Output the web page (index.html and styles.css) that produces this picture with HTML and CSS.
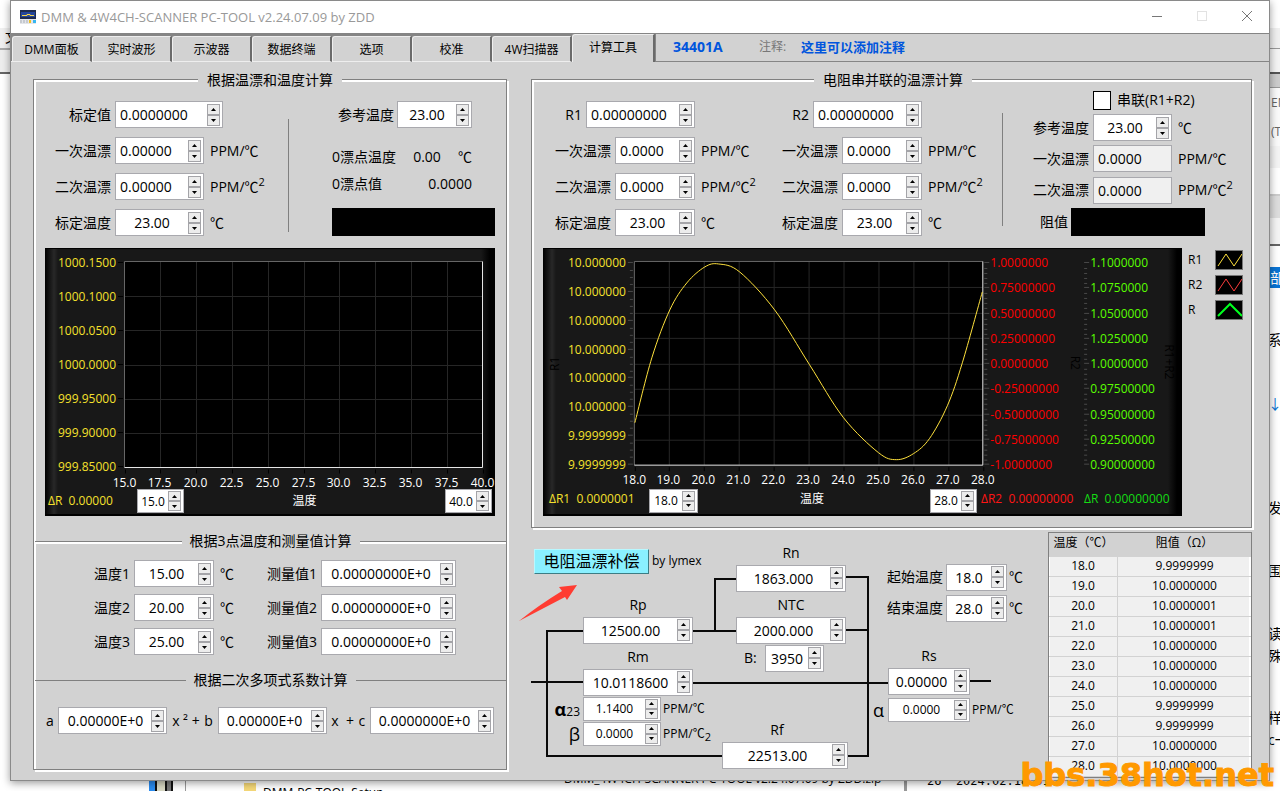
FILE: index.html
```
<!DOCTYPE html>
<html lang="zh-CN">
<head>
  <meta charset="UTF-8">
  <meta name="viewport" content="width=device-width, initial-scale=1.0">
  <title>DMM &amp; 4W4CH-SCANNER PC-TOOL</title>
  <link rel="stylesheet" href="styles.css">
</head>
<body>
  <!-- other windows behind the tool -->
  <div class="desktop">
    <div class="strip-left"><span>文</span></div>
    <div class="strip-right">
      <div class="bar-light"></div>
      <div class="bar-tabs"></div>
      <div class="bar-menu">EN<br>(T)</div>
      <div class="bar-tools"></div>
      <div class="bar-sel">部</div>
      <span class="frag f1">系类</span>
      <span class="frag f2">↓</span>
      <span class="frag f3">发</span>
      <span class="frag f4">围</span>
      <span class="frag f5">读</span>
      <span class="frag f6">殊</span>
      <span class="frag f7">样了</span>
      <span class="frag f8">c一</span>
    </div>
    <div class="strip-bottom">
      <span class="file-mark"></span>
      <span class="file folder">DMM-PC-TOOL-Setup</span>
      <span class="file zip">DMM_4W4CH-SCANNER PC-TOOL v2.24.07.09 by ZDD.zip</span>
      <span class="file code">26&nbsp; 2024.02.18 01</span>
    </div>
  </div>

  <div class="window">
    <header class="titlebar">
      <svg class="app-icon" width="16" height="14" viewBox="0 0 16 14">
        <rect width="16" height="9" fill="#1d2b4f"/>
        <rect x="1" y="2" width="14" height="5" fill="#23459a"/>
        <path d="M2 5.500h5v-1h3v1h4" stroke="#f5d44a" fill="none"/>
        <rect y="9" width="16" height="5" fill="#e4e6ea"/>
        <path d="M1 10v3M4 10v3M7 10v3" stroke="#a8adb5"/>
        <rect x="9" y="10" width="2" height="3" fill="#f0c020"/>
        <rect x="13" y="10" width="3" height="3" fill="#35b6f0"/>
      </svg>
      <h1>DMM &amp; 4W4CH-SCANNER PC-TOOL v2.24.07.09 by ZDD</h1>
      <div class="win-buttons">
        <button type="button" aria-label="minimize"><svg width="12" height="12"><path d="M1 6.500h10" stroke="#777"/></svg></button>
        <button type="button" aria-label="maximize" disabled><svg width="12" height="12"><rect x="1.500" y="1.500" width="9" height="9" fill="none" stroke="#e2e2e2"/></svg></button>
        <button type="button" aria-label="close"><svg width="12" height="12"><path d="M1 1l10 10M11 1L1 11" stroke="#777"/></svg></button>
      </div>
    </header>

    <nav class="tabs">
      <button type="button">DMM面板</button>
      <button type="button">实时波形</button>
      <button type="button">示波器</button>
      <button type="button">数据终端</button>
      <button type="button">选项</button>
      <button type="button">校准</button>
      <button type="button">4W扫描器</button>
      <button type="button" class="active">计算工具</button>
      <div class="tab-info">
        <strong class="model">34401A</strong>
        <span class="note-label">注释:</span>
        <strong class="note">这里可以添加注释</strong>
      </div>
    </nav>

    <main>
      <section class="panel left-panel">
        <h2 class="caption">根据温漂和温度计算</h2>
        <div class="top-row">
          <div class="fields single">
            <label for="cal-value">标定值</label>
            <span class="spin w108 span2"><input id="cal-value" value="0.0000000"></span>
            <label for="tc1">一次温漂</label>
            <span class="spin"><input id="tc1" value="0.00000"></span><span class="unit">PPM/℃</span>
            <label for="tc2">二次温漂</label>
            <span class="spin"><input id="tc2" value="0.00000"></span><span class="unit">PPM/℃<sup>2</sup></span>
            <label for="cal-temp">标定温度</label>
            <span class="spin center"><input id="cal-temp" value="23.00"></span><span class="unit">℃</span>
          </div>
          <div class="rule"></div>
          <div class="zero">
            <div class="zero-ref">
              <label for="ref-temp">参考温度</label>
              <span class="spin center w75"><input id="ref-temp" value="23.00"></span>
            </div>
            <div class="zero-line"><span>0漂点温度</span><output>0.00</output><span>℃</span></div>
            <div class="zero-line"><span>0漂点值</span><output>0.0000</output></div>
            <div class="display"></div>
          </div>
        </div>

        <div class="chart">
          <svg id="chart-single" viewBox="0 0 450 241"></svg>
          <div class="chart-footer single-footer">
            <span class="delta yellow">ΔR&nbsp; 0.00000</span>
            <span class="spin small center w47"><input aria-label="最低温度" value="15.0"></span>
            <span class="axis-title">温度</span>
            <span class="spin small center w47"><input aria-label="最高温度" value="40.0"></span>
          </div>
        </div>

        <h2 class="divider double">根据3点温度和测量值计算</h2>
        <div class="points">
          <label for="t1">温度1</label><span class="spin center"><input id="t1" value="15.00"></span><span class="unit">℃</span>
          <label for="m1">测量值1</label><span class="spin center"><input id="m1" value="0.00000000E+0"></span>
          <label for="t2">温度2</label><span class="spin center"><input id="t2" value="20.00"></span><span class="unit">℃</span>
          <label for="m2">测量值2</label><span class="spin center"><input id="m2" value="0.00000000E+0"></span>
          <label for="t3">温度3</label><span class="spin center"><input id="t3" value="25.00"></span><span class="unit">℃</span>
          <label for="m3">测量值3</label><span class="spin center"><input id="m3" value="0.00000000E+0"></span>
        </div>

        <h2 class="divider">根据二次多项式系数计算</h2>
        <div class="poly">
          <label for="pa">a</label><span class="spin center w109"><input id="pa" value="0.00000E+0"></span>
          <span class="op">x ² +</span>
          <label for="pb">b</label><span class="spin center w109"><input id="pb" value="0.00000E+0"></span>
          <span class="op">x&nbsp; +</span>
          <label for="pc">c</label><span class="spin center w124"><input id="pc" value="0.0000000E+0"></span>
        </div>
      </section>

      <div class="right-column">
        <section class="panel right-panel">
          <h2 class="caption">电阻串并联的温漂计算</h2>
          <div class="top-row">
            <div class="fields double">
              <div class="wide-field"><label for="r1">R1</label><span class="spin w109"><input id="r1" value="0.00000000"></span></div>
              <label for="r1a">一次温漂</label>
              <span class="spin"><input id="r1a" value="0.0000"></span><span class="unit">PPM/℃</span>
              <label for="r1b">二次温漂</label>
              <span class="spin"><input id="r1b" value="0.0000"></span><span class="unit">PPM/℃<sup>2</sup></span>
              <label for="r1t">标定温度</label>
              <span class="spin center"><input id="r1t" value="23.00"></span><span class="unit">℃</span>
            </div>
            <div class="fields double">
              <div class="wide-field"><label for="r2">R2</label><span class="spin w109"><input id="r2" value="0.00000000"></span></div>
              <label for="r2a">一次温漂</label>
              <span class="spin"><input id="r2a" value="0.0000"></span><span class="unit">PPM/℃</span>
              <label for="r2b">二次温漂</label>
              <span class="spin"><input id="r2b" value="0.0000"></span><span class="unit">PPM/℃<sup>2</sup></span>
              <label for="r2t">标定温度</label>
              <span class="spin center"><input id="r2t" value="23.00"></span><span class="unit">℃</span>
            </div>
            <div class="rule"></div>
            <div class="fields result">
              <div class="series"><input type="checkbox" id="series"><label for="series">串联(R1+R2)</label></div>
              <label for="rt">参考温度</label>
              <span class="spin center"><input id="rt" value="23.00"></span><span class="unit">℃</span>
              <label for="ra">一次温漂</label>
              <input class="readout" id="ra" value="0.0000" readonly><span class="unit">PPM/℃</span>
              <label for="rb">二次温漂</label>
              <input class="readout" id="rb" value="0.0000" readonly><span class="unit">PPM/℃<sup>2</sup></span>
              <div class="ohms"><span>阻值</span><div class="display"></div></div>
            </div>
          </div>

          <div class="chart-row">
            <div class="chart">
              <svg id="chart-double" viewBox="0 0 640 241"></svg>
              <div class="chart-footer double-footer">
                <span class="delta yellow">ΔR1&nbsp; 0.0000001</span>
                <span class="spin small center w49"><input aria-label="最低温度" value="18.0"></span>
                <span class="axis-title">温度</span>
                <span class="spin small center w47"><input aria-label="最高温度" value="28.0"></span>
                <span class="delta red">ΔR2&nbsp; 0.00000000</span>
                <span class="delta green">ΔR&nbsp; 0.00000000</span>
              </div>
            </div>
            <ul class="legend">
              <li>R1<svg width="28" height="20"><path d="M2 15l8-12 8 12 8-12" stroke="#ffe23c"/></svg></li>
              <li>R2<svg width="28" height="20"><path d="M2 15l8-12 8 12 8-12" stroke="#ff3c3c"/></svg></li>
              <li>R<svg width="28" height="20"><path d="M2 15L14 3l12 12" stroke="#00ff1e" stroke-width="2"/></svg></li>
            </ul>
          </div>
        </section>

        <div class="bottom-row">
          <section class="circuit">
            <svg class="wires" width="500" height="245" viewBox="0 0 500 245">
              <g fill="none" stroke="#0a0a0a" stroke-width="2">
                <path d="M52 103H16V228H191M0 154H52M162 103H205M205 51H184V103"/>
                <path d="M315 49H337V228H317M315 102H337M162 155H357M438 153H460"/>
              </g>
              <path class="pointer" d="M46 57L28 59L31 63Q8 77 -12 93L34 69L36 72Z" fill="#ff3c32"/>
            </svg>
            <div class="node heading">
              <button type="button" class="compensate">电阻温漂补偿</button><span>by lymex</span>
            </div>
            <div class="node rn"><label for="rn">Rn</label><span class="spin center"><input id="rn" value="1863.000"></span></div>
            <div class="node ntc"><label for="ntc">NTC</label><span class="spin center"><input id="ntc" value="2000.000"></span></div>
            <div class="node beta-b"><label for="bval">B:</label><span class="spin center"><input id="bval" value="3950"></span></div>
            <div class="node rp"><label for="rp">Rp</label><span class="spin center"><input id="rp" value="12500.00"></span></div>
            <div class="node rm"><label for="rm">Rm</label><span class="spin center"><input id="rm" value="10.0118600"></span></div>
            <div class="node rm-tc">
              <label for="alpha23"><b class="greek">α</b>23</label><span class="spin small center"><input id="alpha23" value="1.1400"></span><span>PPM/℃</span>
              <label for="beta"><span class="greek">β</span></label><span class="spin small center"><input id="beta" value="0.0000"></span><span>PPM/℃<sub>2</sub></span>
            </div>
            <div class="node rf"><label for="rf">Rf</label><span class="spin center"><input id="rf" value="22513.00"></span></div>
            <div class="node rs"><label for="rs">Rs</label><span class="spin center"><input id="rs" value="0.00000"></span></div>
            <div class="node rs-tc"><label for="alpha" class="greek">α</label><span class="spin small center"><input id="alpha" value="0.0000"></span><span>PPM/℃</span></div>
            <div class="node span-temps">
              <label for="start">起始温度</label><span class="spin center"><input id="start" value="18.0"></span><span>℃</span>
              <label for="end">结束温度</label><span class="spin center"><input id="end" value="28.0"></span><span>℃</span>
            </div>
          </section>

          <table class="results">
            <thead><tr><th>温度（℃）</th><th>阻值（Ω）</th></tr></thead>
            <tbody>
              <tr><td>18.0</td><td>9.9999999</td></tr>
              <tr><td>19.0</td><td>10.0000000</td></tr>
              <tr><td>20.0</td><td>10.0000001</td></tr>
              <tr><td>21.0</td><td>10.0000001</td></tr>
              <tr><td>22.0</td><td>10.0000000</td></tr>
              <tr><td>23.0</td><td>10.0000000</td></tr>
              <tr><td>24.0</td><td>10.0000000</td></tr>
              <tr><td>25.0</td><td>9.9999999</td></tr>
              <tr><td>26.0</td><td>9.9999999</td></tr>
              <tr><td>27.0</td><td>10.0000000</td></tr>
              <tr><td>28.0</td><td>10.0000000</td></tr>
            </tbody>
          </table>
        </div>
      </div>
    </main>
  </div>
  <div class="watermark">bbs.38hot.net</div>

  <script src="script.js"></script>
</body>
</html>
```
FILE: styles.css
```
* {
  box-sizing: border-box;
}

body {
  margin: 0;
  min-height: 100vh;
  position: relative;
  overflow: hidden;
  background-color: #fff;
  color: #000;
  font-family: "Open Sans", "Noto Sans CJK SC", sans-serif;
  font-size: 14px;
  line-height: 20px;
}

button,
input {
  font-family: inherit;
  color: inherit;
}

/* windows behind */
.desktop {
  position: absolute;
  inset: 0;
  overflow: hidden;
}

.strip-left {
  position: absolute;
  left: 0;
  top: 0;
  width: 12px;
  height: 74px;
  padding-top: 27px;
  background: linear-gradient(#fff 28px, #f0f0f0 28px 48px, #aaa 48px 50px, #eee 50px 72px, #666 72px);
}

.strip-left span {
  margin-left: 5px;
}

.strip-right {
  position: absolute;
  right: 0;
  top: 0;
  width: 12px;
  height: 100%;
  line-height: 16px;
}

.bar-light {
  height: 48px;
  background: linear-gradient(#fff 28px, #f0f0f0 28px);
}

.bar-tabs {
  height: 40px;
  border-top: 1px solid #999;
  border-bottom: 1px solid #999;
  background: linear-gradient(#f4f4f4 23px, #555 23px 25px, #ccc 25px);
}

.bar-menu {
  height: 58px;
  padding-left: 3px;
  background-color: #fafafa;
  color: #666;
  font-size: 12px;
  line-height: 29px;
  white-space: nowrap;
  overflow: hidden;
}

.bar-tools {
  height: 100px;
  background: linear-gradient(#f4f4f4 22px, #fff 22px 48px, #ccc 48px 50px, #ddd 50px 72px, #f4f4f4 72px 98px, #666 98px);
}

.bar-sel {
  margin-top: 21px;
  padding-left: 2px;
  background-color: #0a74d4;
  color: #fff;
  height: 21px;
  line-height: 21px;
  overflow: hidden;
}

.frag {
  position: absolute;
  right: 0;
  width: 12px;
  overflow: hidden;
  white-space: nowrap;
}

.f1 { top: 332px; }
.f2 { top: 396px; color: #0a74d4; }
.f3 { top: 500px; }
.f4 { top: 563px; }
.f5 { top: 626px; }
.f6 { top: 648px; }
.f7 { top: 710px; }
.f8 { top: 732px; }

.strip-bottom {
  position: absolute;
  left: 0;
  right: 0;
  bottom: 0;
  height: 12px;
  line-height: 20px;
  white-space: nowrap;
}

.file-mark {
  position: absolute;
  left: 149px;
  width: 37px;
  height: 12px;
  background: linear-gradient(90deg, #2a8cf0 6px, #111 6px 8px, #d8d8c4 8px 16px, #111 16px 18px, #777 18px 22px, #111 22px 24px, #fff 24px 36px, #999 36px);
}

.file {
  position: absolute;
  font-size: 12px;
}

.folder {
  left: 244px;
  top: 4px;
  padding-left: 19px;
  background: linear-gradient(90deg, #f5d878 12px, transparent 12px);
}

.zip {
  left: 544px;
  top: -10px;
  padding-left: 20px;
}

.code {
  left: 904px;
  top: -8px;
  padding-left: 20px;
  border-left: 3px solid #999;
  font-family: "DejaVu Sans Mono", monospace;
}

.window {
  position: relative;
  margin: 0 10px 10px;
  border: 1px solid #8a8a8a;
  background-color: #d2d2d2;
  box-shadow: 0 2px 8px rgba(0, 0, 0, 0.4);
}

.titlebar {
  display: flex;
  align-items: center;
  height: 32px;
  padding-left: 9px;
  background-color: #fff;
}

.titlebar h1 {
  flex: 1;
  margin: 0 0 0 5px;
  font-size: 13px;
  font-weight: normal;
  color: #999;
}

.win-buttons {
  display: flex;
}

.win-buttons button {
  width: 45px;
  height: 30px;
  padding: 0;
  border: none;
  background: none;
}

.tabs {
  display: flex;
  align-items: flex-end;
  height: 29px;
  padding-left: 1px;
  background-color: #858585;
}

.tabs button {
  width: 80px;
  height: 26px;
  padding: 0;
  border: none;
  border-top: 1px solid #eee;
  border-left: 1px solid #eee;
  border-right: 2px solid #6a6a6a;
  border-bottom: 1px solid #eee;
  border-top-left-radius: 3px;
  background-color: #d2d2d2;
  font-size: 12px;
}

.tabs .active {
  width: 83px;
  height: 28px;
  padding-bottom: 4px;
  border-bottom: none;
}

.tab-info {
  flex: 1;
  display: flex;
  align-items: center;
  height: 28px;
  padding: 0 0 2px 17px;
  background-color: #d2d2d2;
  border-left: 1px solid #858585;
  border-bottom: 1px solid #858585;
  color: #0055dd;
}

.model {
  width: 86px;
}

.note-label {
  width: 42px;
  color: #777;
  font-size: 12px;
}

.note {
  font-size: 13px;
}

main {
  display: grid;
  grid-template-columns: minmax(0, 474fr) minmax(0, 721fr);
  gap: 24px;
  padding: 17px 17px 2px 22px;
  border-top: 1px solid #eee;
  margin-top: -1px;
}

/* engraved group box */
.panel {
  padding: 0 11px;
  border: 1px solid #808080;
  box-shadow: inset 2px 2px #fff, 2px 2px #fff;
}

.left-panel {
  margin-bottom: 8px;
}

.right-panel {
  padding-right: 8px;
  padding-bottom: 11px;
}

.caption {
  width: fit-content;
  height: 20px;
  margin: -10px auto 0;
  padding: 0 9px;
  background-color: #d2d2d2;
  font-size: 14px;
  font-weight: normal;
}

.divider {
  display: flex;
  align-items: center;
  gap: 8px;
  margin: 15px -11px 0 -10px;
  padding-right: 4px;
  font-size: 14px;
  font-weight: normal;
}

.divider::before,
.divider::after {
  content: "";
  flex: 1;
  height: 1px;
  background-color: #808080;
}

.divider::after {
  margin-right: -4px;
}

.double.divider::before,
.double.divider::after {
  box-shadow: 0 2px #fff, 0 1px #fff;
}

.top-row {
  display: flex;
}

.rule {
  width: 1px;
  height: 113px;
  margin-top: 29px;
  background-color: #808080;
}

.fields {
  display: grid;
  row-gap: 9px;
  align-items: center;
}

.fields > label {
  text-align: right;
  padding-right: 4px;
  white-space: nowrap;
}

.unit {
  padding-left: 6px;
  white-space: nowrap;
}

sup,
sub {
  font-size: 11px;
  line-height: 0;
}

.single {
  width: 243px;
  grid-template-columns: 70px 89px 1fr;
  margin-top: 11px;
}

.span2 {
  grid-column: span 2;
}

.fields.double {
  width: 227px;
  grid-template-columns: 72px 80px 1fr;
  margin-top: 11px;
}

.wide-field {
  grid-column: 1 / span 2;
  display: flex;
  justify-content: flex-end;
  align-items: center;
  gap: 4px;
}

.double > label {
  grid-column: 1;
}

.fields.double ~ .rule {
  margin: 23px 0 0 5px;
}

.result {
  grid-template-columns: 60px 79px 1fr;
  row-gap: 4px;
  margin-left: 30px;
}

.series,
.ohms {
  grid-column: span 3;
  display: flex;
  align-items: center;
}

.series input {
  appearance: none;
  width: 18px;
  height: 19px;
  margin: 0 6px 0 60px;
  border: 1px solid #000;
  background-color: #fff;
}

.ohms span {
  margin: 0 3px 0 7px;
}

.display {
  width: 134px;
  height: 28px;
  background-color: #000;
}

.zero {
  flex: 1;
  padding: 11px 0 0 43px;
}

.zero .display {
  width: auto;
  margin-top: 11px;
}

.zero-ref,
.zero-line {
  display: flex;
  align-items: center;
  justify-content: space-between;
  width: 140px;
  height: 27px;
}

.zero-ref {
  justify-content: flex-end;
  gap: 3px;
  margin-bottom: 15px;
}

/* numeric field with stepper */
.spin {
  display: flex;
  align-items: center;
  height: 27px;
  border: 1px solid #a9a9ae;
  background-color: #fff;
}

.spin input {
  flex: 1;
  min-width: 0;
  width: 10px;
  height: 100%;
  padding: 0 0 0 4px;
  border: none;
  background: none;
  font-size: 14px;
  outline: none;
}

.center input {
  padding: 0;
  text-align: center;
}

.steps {
  display: flex;
  flex-direction: column;
  margin-right: 2px;
}

.steps button {
  display: flex;
  align-items: center;
  justify-content: center;
  width: 13px;
  height: 11px;
  padding: 0;
  border: 1px solid #a4a4a8;
  background-color: #ececec;
}

.steps button:hover {
  background-color: #dcebf8;
}

.small {
  height: 24px;
}

.small input {
  font-size: 12px;
}

.small .steps button {
  height: 10px;
}

.w47 { width: 47px; }
.w49 { width: 49px; }
.w75 { width: 75px; }
.w108 { width: 108px; }
.w109 { width: 109px; }
.w124 { width: 124px; }

.readout {
  height: 27px;
  min-width: 0;
  padding: 0 4px;
  border: 1px solid #a9a9ae;
  background-color: #f0f0f0;
  font-size: 14px;
}

/* charts */
.chart {
  flex: 1;
  margin-top: 12px;
  background: linear-gradient(90deg, #000, #282828 9px, #181818 13px, #181818 calc(100% - 14px), #000 calc(100% - 5px));
  box-shadow: inset 0 1px #000, inset 0 -2px #000;
  color: #fff;
  font-size: 12px;
}

.chart > svg {
  display: block;
  width: 100%;
}

.chart text {
  font-size: 12px;
}

.chart-footer {
  display: flex;
  height: 27px;
}

.chart-footer .spin {
  color: #000;
}

.single-footer .delta {
  width: 92px;
  padding: 2px 0 0 3px;
}

.single-footer .spin:last-child {
  margin-right: 3px;
}

.axis-title {
  flex: 1;
  text-align: center;
  padding: 2px 20px 0 0;
}

.double-footer .axis-title {
  padding: 0 4px 0 0;
}

.double-footer .yellow {
  width: 106px;
  padding-left: 6px;
}

.double-footer .red {
  width: 107px;
  padding-left: 4px;
}

.double-footer .green {
  width: 98px;
}

.delta {
  white-space: nowrap;
}

.yellow { color: #f5e02d; }
.red { color: #ff1414; }
.green { color: #14dc14; }

.chart-row {
  display: flex;
}

.legend {
  width: 61px;
  margin: 14px 0 0;
  padding: 0 0 0 6px;
  list-style: none;
  font-size: 12px;
}

.legend li {
  display: flex;
  justify-content: space-between;
  height: 25px;
}

.legend svg {
  background-color: #000;
  border: 1px solid #777;
  fill: none;
}

.points {
  display: grid;
  grid-template-columns: 89px 80px 49px 58px 135px;
  row-gap: 7px;
  align-items: center;
  padding-top: 9px;
}

.points label {
  padding-right: 4px;
  text-align: right;
  white-space: nowrap;
}

.poly {
  display: flex;
  align-items: center;
  justify-content: space-between;
  padding: 17px 1px 34px 1px;
}

.poly .op {
  white-space: nowrap;
}

/* compensation network */
.bottom-row {
  display: flex;
}

.circuit {
  position: relative;
  flex: 1;
  height: 250px;
}

.wires {
  position: absolute;
  overflow: visible;
}

.node {
  position: absolute;
  white-space: nowrap;
}

.node > label {
  display: block;
  line-height: 24px;
  text-align: center;
}

.heading {
  left: 3px;
  top: 21px;
  display: flex;
  align-items: center;
  gap: 3px;
  font-size: 12px;
}

.compensate {
  width: 115px;
  height: 25px;
  padding: 0;
  border: 1px solid #b8f8ff;
  border-right-color: #3c7d85;
  border-bottom-color: #3c7d85;
  background-color: #8af0ff;
  font-size: 16px;
  line-height: 20px;
}

.rn { left: 205px; top: 13px; width: 110px; }
.ntc { left: 205px; top: 65px; width: 110px; }
.rp { left: 52px; top: 65px; width: 110px; }
.rm { left: 52px; top: 117px; width: 110px; }
.rf { left: 191px; top: 190px; width: 126px; }
.rs { left: 357px; top: 116px; width: 82px; }

.rf > label {
  padding-right: 16px;
}

.beta-b {
  left: 213px;
  top: 117px;
  display: grid;
  grid-template-columns: 21px 59px;
  align-items: center;
}

.beta-b label {
  text-align: left;
}

.rm-tc {
  left: 16px;
  top: 169px;
  display: grid;
  grid-template-columns: 36px 78px 60px;
  grid-auto-rows: 24px;
  row-gap: 1px;
  font-size: 12px;
}

.rm-tc > label {
  padding-right: 3px;
  text-align: right;
}

.rm-tc > span:not(.spin),
.rs-tc > span:not(.spin) {
  padding: 2px 0 0 2px;
}

.greek {
  font-size: 18px;
}

.rs-tc {
  left: 342px;
  top: 170px;
  display: grid;
  grid-template-columns: 15px 82px 50px;
  font-size: 12px;
}

.rs-tc > label {
  text-align: left;
}

.span-temps {
  left: 356px;
  top: 36px;
  display: grid;
  grid-template-columns: 59px 61px 16px;
  gap: 4px 0;
  align-items: center;
}

.span-temps > label {
  text-align: left;
}

.span-temps > span:last-child,
.span-temps > span:nth-child(3) {
  padding-left: 2px;
}

.results {
  width: 204px;
  height: 246px;
  margin-top: 4px;
  border: 1px solid #808080;
  border-spacing: 0;
  table-layout: fixed;
  background-color: #f0f0f0;
  font-size: 12px;
  line-height: 18px;
  box-shadow: inset 1px 1px #fff, inset -2px 0 #fff;
}

.results th {
  height: 24px;
  padding: 0 0 4px;
  background-color: #d2d2d2;
  font-weight: normal;
  white-space: nowrap;
}

.results th:first-child {
  width: 69px;
}

.results td {
  height: 20px;
  padding: 0;
  border-bottom: 1px solid #d2d2d2;
  text-align: center;
}

.results td:first-child {
  border-right: 1px solid #d2d2d2;
}

.watermark {
  position: absolute;
  right: 6px;
  bottom: 0;
  color: #ff9900;
  font: bold 32px/32px "DejaVu Sans", sans-serif;
  -webkit-text-stroke: 1px #ff9900;
}
```
FILE: script.js
```
// add up/down buttons to every numeric field
document.querySelectorAll(".spin").forEach(spin => {
  const input = spin.querySelector("input");
  const steps = document.createElement("span");
  steps.className = "steps";
  steps.innerHTML = `
    <button type="button" tabindex="-1" aria-label="up"><svg width="5" height="3"><path d="M0 3L2.500 0L5 3z"/></svg></button>
    <button type="button" tabindex="-1" aria-label="down"><svg width="5" height="3"><path d="M0 0L2.500 3L5 0z"/></svg></button>
  `;
  const [up, down] = steps.querySelectorAll("button");
  up.addEventListener("click", () => step(input, 1));
  down.addEventListener("click", () => step(input, -1));
  spin.appendChild(steps);
});

function step(input, delta) {
  const value = parseFloat(input.value) + delta;
  if (input.value.includes("E")) {
    const digits = input.value.split("E")[0].split(".")[1].length;
    input.value = value.toExponential(digits).toUpperCase();
    return;
  }
  const digits = (input.value.split(".")[1] || "").length;
  input.value = value.toFixed(digits);
}

function line(x1, y1, x2, y2, color) {
  return `<path d="M${x1} ${y1}L${x2} ${y2}" stroke="${color}" fill="none"/>`;
}

function text(x, y, value, color, anchor) {
  return `<text x="${x}" y="${y}" fill="${color}" text-anchor="${anchor}">${value}</text>`;
}

// plot area with grid, sunken border and temperature axis
function plotArea(left, top, right, bottom, rows, temps) {
  let out = `<rect x="${left}" y="${top}" width="${right - left}" height="${bottom - top}" fill="#000"/>`;
  for (let i = 1; i < rows; i++) {
    const y = Math.round(top + (bottom - top) * i / rows) + 0.5;
    out += line(left, y, right, y, "#262626");
  }
  temps.forEach((t, i) => {
    const x = Math.round(left + (right - left) * i / (temps.length - 1)) + 0.5;
    if (i > 0 && i < temps.length - 1) out += line(x, top, x, bottom, "#262626");
    out += line(x, bottom + 2, x, bottom + 6, "#000");
    out += text(x - 1, bottom + 19, t, "#fff", "middle");
  });
  out += `<path d="M${left} ${bottom}V${top}H${right}" stroke="#666" fill="none"/>`;
  out += `<path d="M${left} ${bottom}H${right}V${top}" stroke="#e6e6e6" fill="none"/>`;
  return out;
}

function scale(values, x, top, bottom, color, anchor, tickX, minor) {
  let out = "";
  const gap = (bottom - top) / (values.length - 1);
  values.forEach((v, i) => {
    const y = Math.round(top + gap * i) + 0.5;
    out += text(x, y + 4.5, v, color, anchor);
    out += line(tickX, y, tickX + 5, y, minor ? "#4a4a4a" : "#000");
    for (let k = 1; minor && k < minor && i < values.length - 1; k++) {
      const my = Math.round(y + gap * k / minor) + 0.5;
      const mx = anchor === "end" ? tickX + 2 : tickX;
      out += line(mx, my, mx + 3, my, "#4a4a4a");
    }
  });
  return out;
}

// smooth line through the points
function curve(points) {
  let d = `M${points[0].join(" ")}`;
  for (let i = 0; i < points.length - 1; i++) {
    const p0 = points[i - 1] || points[i];
    const [p1, p2] = [points[i], points[i + 1]];
    const p3 = points[i + 2] || p2;
    d += `C${p1[0] + (p2[0] - p0[0]) / 6} ${p1[1] + (p2[1] - p0[1]) / 6} ${p2[0] - (p3[0] - p1[0]) / 6} ${p2[1] - (p3[1] - p1[1]) / 6} ${p2[0]} ${p2[1]}`;
  }
  return `<path d="${d}" stroke="#ffe23c" fill="none"/>`;
}

document.getElementById("chart-single").innerHTML =
  plotArea(79.5, 13.5, 437.5, 219.5, 6,
    ["15.0", "17.5", "20.0", "22.5", "25.0", "27.5", "30.0", "32.5", "35.0", "37.5", "40.0"]) +
  scale(["1000.1500", "1000.1000", "1000.0500", "1000.0000", "999.95000", "999.90000", "999.85000"],
    71, 14, 218, "#f5e02d", "end", 73, 0);

const r1 = [
  [92, 175], [109, 110], [127, 62], [144, 35], [162, 19], [176, 16], [197, 24], [232, 62],
  [267, 117], [301, 170], [336, 205], [354, 212], [371, 206], [387, 191], [405, 158], [420, 115], [440, 44]
];

document.getElementById("chart-double").innerHTML =
  plotArea(91.5, 13.5, 440.5, 217.5, 8,
    ["18.0", "19.0", "20.0", "21.0", "22.0", "23.0", "24.0", "25.0", "26.0", "27.0", "28.0"]) +
  scale(["10.000000", "10.000000", "10.000000", "10.000000", "10.000000", "10.000000", "9.9999999", "9.9999999"],
    83, 14, 216, "#f5e02d", "end", 85, 4) +
  scale(["1.0000000", "0.75000000", "0.50000000", "0.25000000", "0.0000000", "-0.25000000", "-0.50000000", "-0.75000000", "-1.0000000"],
    448, 14, 216, "#f00", "start", 442, 5) +
  scale(["1.1000000", "1.0750000", "1.0500000", "1.0250000", "1.0000000", "0.97500000", "0.95000000", "0.92500000", "0.90000000"],
    548, 14, 216, "#5aff00", "start", 542, 5) +
  curve(r1) +
  `<text transform="translate(16 116) rotate(-90)" text-anchor="middle">R1</text>
   <text transform="translate(529 115) rotate(90)" text-anchor="middle">R2</text>
   <text transform="translate(623 114) rotate(90)" text-anchor="middle">R1+R2</text>`;
```
